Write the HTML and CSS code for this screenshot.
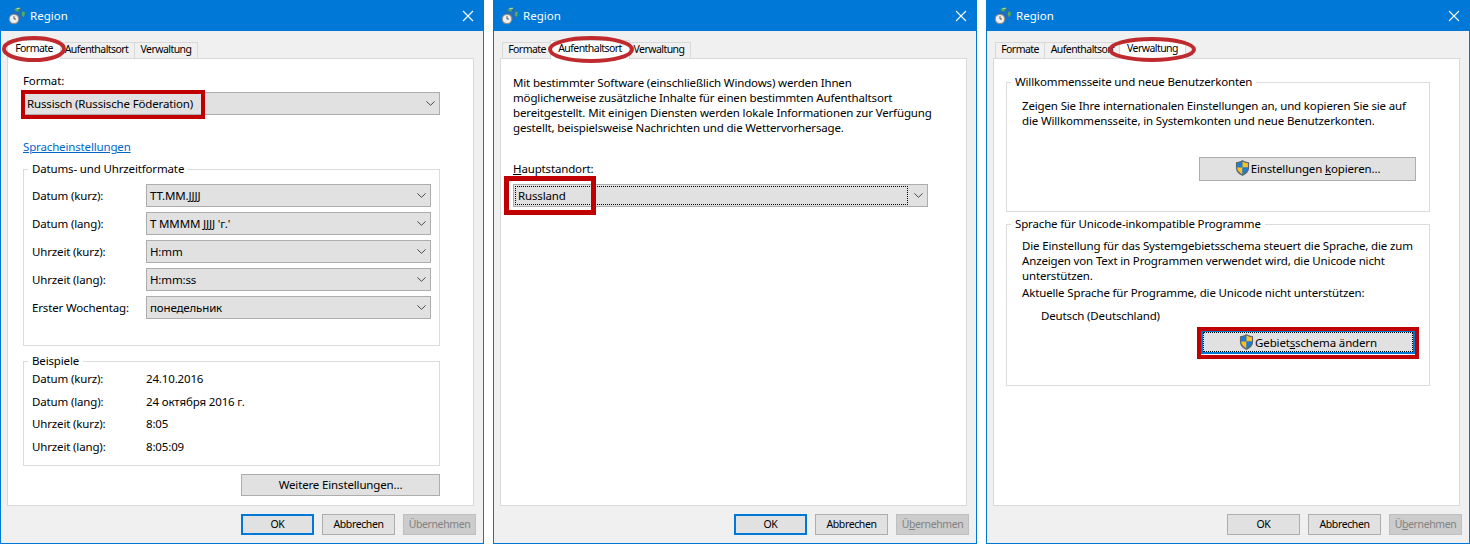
FILE: index.html
```html
<!DOCTYPE html>
<html lang="de">
<head>
<meta charset="utf-8">
<title>Region</title>
<link rel="stylesheet" href="styles.css">
</head>
<body>
<svg class="defs" width="0" height="0" aria-hidden="true">
  <symbol id="globe" viewBox="0 0 18 18">
    <circle cx="10.500" cy="6.500" r="6.300" fill="#1f6fc0"/>
    <path d="M6.500 2.500C8 .8 10.500.3 12.300.6c.6.8-.4 1.500-1.300 1.700-.5.9.5 1.700-1 2.100C8.600 4.800 7.700 4 6.500 2.500zM14.500 4.500c.9-.2 1.700 0 2.200.5.4 1.800 0 3.500-1.100 4.900-1-.3-1.700-1-1.800-2.100 0-1.300.2-2.400.7-3.300z" fill="#4fae4f"/>
    <path d="M8 1.500c1.500-.6 3-.6 4.200-.1-1.500.3-3 .5-4.200.1z" fill="#bfe3f7"/>
    <circle cx="6" cy="12" r="5.300" fill="#8f8f8f"/>
    <circle cx="6" cy="12" r="4.100" fill="#efefef"/>
    <path d="M6 9.200V12H8" fill="none" stroke="#555" stroke-width="1"/>
  </symbol>
  <symbol id="shield" viewBox="0 0 16 18">
    <path d="M8 .5C5.800 2 3.500 2.600 1 2.800V9c0 4 3.200 6.800 7 8.500 3.800-1.700 7-4.500 7-8.500V2.800C12.500 2.600 10.200 2 8 .5z" fill="#5b6770"/>
    <path d="M8 2C6.200 3.100 4.300 3.700 2.200 3.900V8.500H8z" fill="#1a7fd4"/>
    <path d="M8 2V8.500H13.800V3.900C11.700 3.700 9.800 3.100 8 2z" fill="#f7c02c"/>
    <path d="M2.200 8.500C2.400 11.800 5 14.300 8 15.800V8.500z" fill="#f7c02c"/>
    <path d="M8 8.500V15.800C11 14.300 13.600 11.800 13.800 8.500z" fill="#1a7fd4"/>
  </symbol>
  <symbol id="chev" viewBox="0 0 9 5">
    <path d="M.4.400 4.500 4.300 8.600.400" fill="none" stroke="#4a4a4a" stroke-width="1"/>
  </symbol>
  <symbol id="close" viewBox="0 0 12 12">
    <path d="M1 1 11 11M11 1 1 11" fill="none" stroke="#fff" stroke-width="1.100"/>
  </symbol>
</svg>

<main class="desk">

  <section class="win">
    <header class="titlebar">
      <svg class="app-icon"><use href="#globe"/></svg>
      <span class="title">Region</span>
      <svg class="close"><use href="#close"/></svg>
    </header>
    <nav class="tabs">
      <span class="tab tab-a active">Formate</span>
      <span class="tab tab-b">Aufenthaltsort</span>
      <span class="tab tab-c">Verwaltung</span>
    </nav>
    <div class="panel panel-format">
      <div class="line format-label">Format:</div>
      <div class="combo format-combo"><span class="combo-text">Russisch (Russische Föderation)</span><svg class="chev"><use href="#chev"/></svg></div>
      <a class="line link">Spracheinstellungen</a>
      <div class="group group-dt">
        <div class="legend">Datums- und Uhrzeitformate</div>
        <div class="rows">
          <div class="row"><span class="row-label">Datum (kurz):</span><div class="combo row-combo"><span class="combo-text">TT.MM.JJJJ</span><svg class="chev"><use href="#chev"/></svg></div></div>
          <div class="row"><span class="row-label">Datum (lang):</span><div class="combo row-combo"><span class="combo-text">T MMMM JJJJ 'г.'</span><svg class="chev"><use href="#chev"/></svg></div></div>
          <div class="row"><span class="row-label">Uhrzeit (kurz):</span><div class="combo row-combo"><span class="combo-text">H:mm</span><svg class="chev"><use href="#chev"/></svg></div></div>
          <div class="row"><span class="row-label">Uhrzeit (lang):</span><div class="combo row-combo"><span class="combo-text">H:mm:ss</span><svg class="chev"><use href="#chev"/></svg></div></div>
          <div class="row"><span class="row-label">Erster Wochentag:</span><div class="combo row-combo"><span class="combo-text">понедельник</span><svg class="chev"><use href="#chev"/></svg></div></div>
        </div>
      </div>
      <div class="group group-ex">
        <div class="legend">Beispiele</div>
        <div class="examples">
          <div class="example"><span class="row-label">Datum (kurz):</span><span>24.10.2016</span></div>
          <div class="example"><span class="row-label">Datum (lang):</span><span>24 октября 2016 г.</span></div>
          <div class="example"><span class="row-label">Uhrzeit (kurz):</span><span>8:05</span></div>
          <div class="example"><span class="row-label">Uhrzeit (lang):</span><span>8:05:09</span></div>
        </div>
      </div>
      <button class="btn more">Weitere Einstellungen...</button>
    </div>
    <footer class="footer">
      <button class="btn foot default">OK</button>
      <button class="btn foot">Abbrechen</button>
      <button class="btn foot disabled">Übernehmen</button>
    </footer>
    <div class="mark rect-format"></div>
    <svg class="mark ring ring-1" viewBox="0 0 64 26"><ellipse cx="32" cy="13" rx="30" ry="11"/></svg>
  </section>

  <section class="win">
    <header class="titlebar">
      <svg class="app-icon"><use href="#globe"/></svg>
      <span class="title">Region</span>
      <svg class="close"><use href="#close"/></svg>
    </header>
    <nav class="tabs">
      <span class="tab tab-a">Formate</span>
      <span class="tab tab-b active">Aufenthaltsort</span>
      <span class="tab tab-c">Verwaltung</span>
    </nav>
    <div class="panel panel-loc">
      <p class="para">Mit bestimmter Software (einschließlich Windows) werden Ihnen<br>möglicherweise zusätzliche Inhalte für einen bestimmten Aufenthaltsort<br>bereitgestellt. Mit einigen Diensten werden lokale Informationen zur Verfügung<br>gestellt, beispielsweise Nachrichten und die Wettervorhersage.</p>
      <div class="line loc-label"><u>H</u>auptstandort:</div>
      <div class="combo loc-combo"><span class="focus-box">Russland</span><svg class="chev"><use href="#chev"/></svg></div>
    </div>
    <footer class="footer">
      <button class="btn foot default">OK</button>
      <button class="btn foot">Abbrechen</button>
      <button class="btn foot disabled"><span>Ü<u>b</u>ernehmen</span></button>
    </footer>
    <div class="mark rect-loc"></div>
    <svg class="mark ring ring-2" viewBox="0 0 86 27"><ellipse cx="43" cy="13.500" rx="41" ry="11.500"/></svg>
  </section>

  <section class="win">
    <header class="titlebar">
      <svg class="app-icon"><use href="#globe"/></svg>
      <span class="title">Region</span>
      <svg class="close"><use href="#close"/></svg>
    </header>
    <nav class="tabs">
      <span class="tab tab-a">Formate</span>
      <span class="tab tab-b">Aufenthaltsort</span>
      <span class="tab tab-c active">Verwaltung</span>
    </nav>
    <div class="panel panel-admin">
      <div class="group group-welcome">
        <div class="legend">Willkommensseite und neue Benutzerkonten</div>
        <p class="para group-para">Zeigen Sie Ihre internationalen Einstellungen an, und kopieren Sie sie auf<br>die Willkommensseite, in Systemkonten und neue Benutzerkonten.</p>
        <button class="btn copy"><svg class="shield"><use href="#shield"/></svg><span>Einstellungen <u>k</u>opieren...</span></button>
      </div>
      <div class="group group-unicode">
        <div class="legend">Sprache für Unicode-inkompatible Programme</div>
        <p class="para group-para">Die Einstellung für das Systemgebietsschema steuert die Sprache, die zum<br>Anzeigen von Text in Programmen verwendet wird, die Unicode nicht<br>unterstützen.</p>
        <p class="para group-para current">Aktuelle Sprache für Programme, die Unicode nicht unterstützen:</p>
        <p class="para locale">Deutsch (Deutschland)</p>
        <button class="btn change"><span class="focus-btn"><svg class="shield"><use href="#shield"/></svg><span>Gebiet<u>s</u>schema ändern</span></span></button>
      </div>
    </div>
    <footer class="footer">
      <button class="btn foot">OK</button>
      <button class="btn foot">Abbrechen</button>
      <button class="btn foot disabled"><span>Ü<u>b</u>ernehmen</span></button>
    </footer>
    <div class="mark rect-change"></div>
    <svg class="mark ring ring-3" viewBox="0 0 88 25"><ellipse cx="44" cy="12.500" rx="42" ry="10.500"/></svg>
  </section>

</main>
</body>
</html>
```

FILE: styles.css
```css
* { box-sizing: border-box; }
html, body { margin: 0; padding: 0; background: #fff; }
body {
  font-family: "Noto Sans", "Open Sans", sans-serif;
  font-size: 11.500px;
  line-height: 15px;
  letter-spacing: -0.150px;
  color: #000;
  overflow: hidden;
}
.defs { position: absolute; }
.desk { display: flex; gap: 9px; width: 1470px; height: 544px; }

.win {
  position: relative;
  width: 484px;
  height: 544px;
  flex: none;
  display: flex;
  flex-direction: column;
  background: #f0f0f0;
  border: 1px solid #0078d7;
}

.titlebar {
  height: 30px;
  flex: none;
  display: flex;
  align-items: center;
  background: #0078d7;
  color: #fff;
  padding: 0 9px 0 7px;
}
.app-icon { width: 18px; height: 18px; margin-top: -1px; }
.title { margin: -1px 0 0 4px; flex: 1; letter-spacing: 0; }
.close { width: 12px; height: 12px; margin-top: -1px; }

.tabs {
  height: 18px;
  margin-top: 9px;
  padding-left: 8px;
  flex: none;
  display: flex;
  align-items: flex-end;
}
.tab {
  position: relative;
  height: 16px;
  background: #f0f0f0;
  border: 1px solid #d9d9d9;
  border-bottom: 0;
  text-align: center;
  font-size: 10.500px;
  letter-spacing: -0.550px;
  line-height: 13px;
  white-space: nowrap;
}
.tab + .tab { border-left: 0; }
.tab-a { width: 50px; }
.tab-b { width: 76px; }
.tab-c { width: 63px; }
.tab.active {
  z-index: 1;
  height: 19px;
  margin: 0 -2px -1px;
  background: #fff;
  border-left: 1px solid #d9d9d9;
  line-height: 14px;
}
.tab-a.active { width: 54px; }
.tab-b.active { width: 80px; }
.tab-c.active { width: 67px; }

.panel {
  flex: 1;
  margin: 0 9px 0 6px;
  background: #fff;
  border: 1px solid #d9d9d9;
  display: flex;
  flex-direction: column;
  min-height: 0;
}
.panel-format { padding: 14px 33px 0 15px; }
.panel-loc { padding: 16px 12px 0 12px; }
.panel-admin { padding: 23px 29px 0 12px; }

.line { white-space: nowrap; }
.format-label { height: 15px; }
.link { margin-top: 24px; color: #0066cc; text-decoration: underline; align-self: flex-start; }

.combo {
  height: 23px;
  flex: none;
  display: flex;
  align-items: center;
  justify-content: space-between;
  background: #e1e1e1;
  border: 1px solid #adadad;
  padding: 0 3px;
  white-space: nowrap;
}
.chev { width: 9px; height: 5px; margin-right: 1px; flex: none; }
.format-combo { margin-top: 4px; }

.group {
  border: 1px solid #dcdcdc;
  flex: none;
  display: flex;
  flex-direction: column;
}
.legend {
  align-self: flex-start;
  margin: -9px 0 0 4px;
  padding: 0 4px;
  background: #fff;
  height: 15px;
  white-space: nowrap;
}
.group-dt { height: 177px; margin-top: 15px; }
.group-ex { height: 105px; margin-top: 15px; }
.rows { display: flex; flex-direction: column; gap: 5px; margin: 8px 8px 0 8px; }
.row { display: flex; align-items: center; }
.row-label { width: 114px; flex: none; white-space: nowrap; }
.row-combo { flex: 1; }
.examples { display: flex; flex-direction: column; gap: 7.670px; margin: 3px 8px 0 8px; }
.example { display: flex; height: 15px; white-space: nowrap; }

.btn {
  font: inherit;
  letter-spacing: inherit;
  color: #000;
  background: #e1e1e1;
  border: 1px solid #adadad;
  padding: 0 0 2px;
  margin: 0;
  display: flex;
  align-items: center;
  justify-content: center;
  white-space: nowrap;
}
.more { width: 199px; height: 22px; margin: 8px 0 0 auto; }

.footer {
  height: 37px;
  flex: none;
  display: flex;
  justify-content: flex-end;
  gap: 8px;
  padding: 8px 7px 0 0;
}
.foot { width: 73px; height: 21px; padding-bottom: 0; font-size: 10.500px; letter-spacing: -0.400px; }
.default { border: 2px solid #0078d7; }
.disabled { background: #cccccc; border-color: #bfbfbf; color: #838383; }

.para { margin: 0; white-space: nowrap; }
.loc-label { margin-top: 26px; }
.loc-combo { width: 415px; margin-top: 8px; padding: 0 3px 0 1px; }
.focus-box {
  flex: 1;
  height: 19px;
  margin-right: 6px;
  padding-left: 2px;
  line-height: 17px;
  border: 1px dotted #000;
}

.group-para { margin: 9px 0 0 15px; }
.group-welcome { height: 130px; }
.group-unicode { height: 162px; margin-top: 12px; }
.group-unicode .group-para { margin-top: 7px; }
.group-unicode .current { margin-top: 2px; }
.locale { margin: 8px 0 0 34px; }
.shield { width: 15px; height: 18px; margin-right: 1px; flex: none; }
.copy { width: 217px; height: 24px; margin: 29px 13px 0 auto; }
.change {
  width: 214px;
  height: 24px;
  margin: 7px 14px 0 auto;
  padding: 0;
  border: 2px solid #0078d7;
}
.focus-btn {
  flex: 1;
  height: 20px;
  display: flex;
  align-items: center;
  justify-content: center;
  border: 1px dotted #000;
}

.mark { position: absolute; z-index: 2; pointer-events: none; }
.rect-format { left: 20px; top: 89px; width: 184px; height: 29px; border: 4px solid #c00000; }
.rect-loc { left: 10px; top: 175px; width: 92px; height: 39px; border: 5px solid #c00000; }
.rect-change { left: 210px; top: 326px; width: 222px; height: 32px; border: 4px solid #c00000; }
.ring { overflow: visible; }
.ring ellipse { fill: none; stroke: #bf2a2e; stroke-width: 4px; }
.ring-1 { left: 1px; top: 35px; width: 64px; height: 26px; }
.ring-2 { left: 54px; top: 35px; width: 86px; height: 27px; }
.ring-3 { left: 121px; top: 36px; width: 88px; height: 25px; }
```
